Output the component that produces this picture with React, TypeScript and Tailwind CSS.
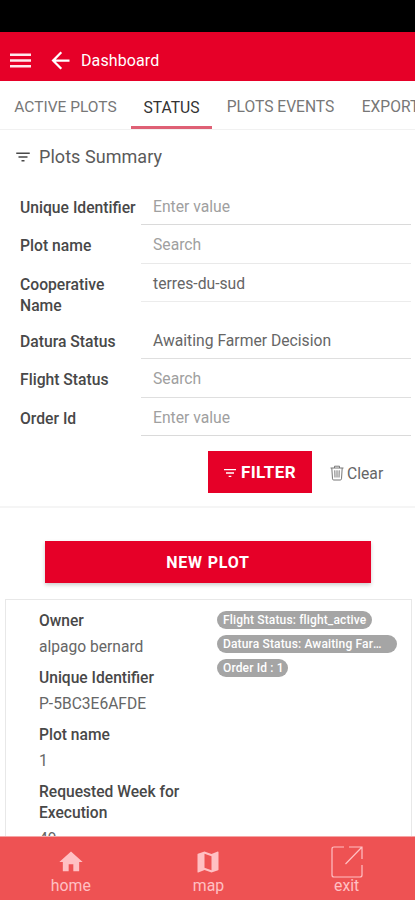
import { MdArrowBack, MdFilterList, MdHome, MdMap } from 'react-icons/md'

const tabs = [
  { label: 'ACTIVE PLOTS', className: 'w-[131px] text-[15.5px]' },
  { label: 'STATUS', className: 'w-[81px] text-[15.7px]', active: true },
  { label: 'PLOTS EVENTS', className: 'w-[137px] text-[15.6px]' },
  { label: 'EXPORTS', className: 'w-[92px] text-[15.6px]' },
]

const filters = [
  { label: 'Unique Identifier', placeholder: 'Enter value', line: 'border-[#dadada]' },
  { label: 'Plot name', placeholder: 'Search', line: 'border-[#e9e9e9]' },
  { label: 'Cooperative Name', value: 'terres-du-sud', line: 'border-[#ececec]' },
  { label: 'Datura Status', value: 'Awaiting Farmer Decision', line: 'border-[#dfdfdf]' },
  { label: 'Flight Status', placeholder: 'Search', line: 'border-[#dfdfdf]' },
  { label: 'Order Id', placeholder: 'Enter value', line: 'border-[#dadada]' },
]

const details = [
  { label: 'Owner', value: 'alpago bernard' },
  { label: 'Unique Identifier', value: 'P-5BC3E6AFDE' },
  { label: 'Plot name', value: '1' },
  { label: 'Requested Week for Execution', value: '49' },
]

const badges = [
  { text: 'Flight Status: flight_active', className: 'w-[155px] pr-1' },
  { text: 'Datura Status: Awaiting Farmer Decision', className: 'w-[180px] pr-3' },
  { text: 'Order Id : 1', className: 'w-[71px] pr-1' },
]

function MenuIcon() {
  return (
    <svg viewBox="0 0 21 15" className="h-[15px] w-[21px]" fill="#ffe9ec">
      <path d="M0 .5h21v2.6H0zM0 6.2h21v2.6H0zM0 11.9h21v2.6H0z" />
    </svg>
  )
}

function TrashIcon() {
  return (
    <svg viewBox="0 0 14 16" className="h-4 w-3.5" fill="none" stroke="#777" strokeWidth="1">
      <path d="M.5 3h13M4.5 3V1.2h5V3M1.8 3l.7 10.8q.1 1.2 1.2 1.2h6.6q1.1 0 1.2-1.2L12.2 3M4.8 5.3l.2 7.2M7 5.3v7.2M9.2 5.3l-.2 7.2" />
    </svg>
  )
}

function ExitIcon() {
  return (
    <svg viewBox="0 0 32 32" className="h-8 w-8" fill="none" stroke="currentColor" strokeWidth="1.2">
      <path d="M13 1H3Q1 1 1 3v26q0 2 2 2h26q2 0 2-2V19M18 1h13v12M31 1 14.5 18" />
    </svg>
  )
}

export default function App() {
  return (
    <div className="flex h-[900px] w-[415px] flex-col overflow-hidden bg-white font-[Roboto,sans-serif] text-[#484848]">
      <div className="h-8 shrink-0 bg-black" />
      <header className="flex h-[49px] shrink-0 items-center bg-[#e60028] pt-2 pl-[10px] text-white">
        <MenuIcon />
        <MdArrowBack className="ml-[16px] h-[27px] w-[27px]" />
        <h1 className="ml-[7px] text-base tracking-[0.1px]">Dashboard</h1>
      </header>

      <nav className="flex h-[49px] shrink-0 overflow-hidden border-b border-[#f1f1f1]">
        {tabs.map((tab) => (
          <div
            key={tab.label}
            className={`flex shrink-0 items-center justify-center border-b-[3px] pt-[9px] ${tab.className} ${
              tab.active ? 'border-[#df6075] text-[#333]' : 'border-transparent text-[#777]'
            }`}
          >
            {tab.label}
          </div>
        ))}
      </nav>

      <main className="min-h-0 flex-1 overflow-hidden">
        <div className="flex h-[57px] items-start pt-[15px] pl-[14px]">
          <MdFilterList className="mt-[3px] h-[18px] w-[18px]" />
          <h2 className="ml-[7px] text-lg leading-6 tracking-[0.05px] text-[#5a5a5a]">Plots Summary</h2>
        </div>

        <section>
          {filters.map((filter) => (
            <div key={filter.label} className="flex min-h-[38.4px] items-start pr-1 pl-5">
              <div className="w-[121px] shrink-0 pt-[10px] pb-[5px] text-[15.7px] leading-[21px] font-medium">
                {filter.label}
              </div>
              <div
                className={`h-[38.4px] flex-1 border-b pt-[9px] pl-3 text-[15.7px] leading-[21px] ${filter.line} ${
                  filter.value ? 'text-[#666]' : 'text-[#a0a0a0]'
                }`}
              >
                {filter.value ?? filter.placeholder}
              </div>
            </div>
          ))}
        </section>

        <div className="flex h-[72px] items-start border-b-2 border-[#f5f5f5] pt-[15px] pl-[208px]">
          <button className="flex h-[42px] w-[104px] items-center gap-[3px] bg-[#e60028] pt-0.5 pl-[14px] text-[17px] font-bold tracking-[0.4px] text-white">
            <MdFilterList className="h-4 w-4" />
            FILTER
          </button>
          <button className="ml-[18px] flex h-[45px] items-center gap-[3px] text-[15.7px] text-[#666]">
            <TrashIcon />
            Clear
          </button>
        </div>

        <button className="mt-[33px] ml-[45px] flex h-[42px] w-[326px] items-center justify-center bg-[#e60028] pt-0.5 text-base font-bold tracking-[0.8px] text-white shadow-[0_2px_4px_rgba(0,0,0,0.2)]">
          NEW PLOT
        </button>

        <article className="mt-4 mr-[3px] ml-[5px] flex h-[300px] border border-[#e8e8e8]">
          <dl className="w-[211px] pt-[11px] pl-[33px] text-[15.6px] leading-[21px]">
            {details.map((detail) => (
              <div key={detail.label} className="mb-[10px]">
                <dt className="w-[150px] font-medium">{detail.label}</dt>
                <dd className="mt-[5px] text-[#666]">{detail.value}</dd>
              </div>
            ))}
          </dl>
          <div className="flex flex-col gap-[6px] pt-[11px]">
            {badges.map((badge) => (
              <span
                key={badge.text}
                className={`block h-[18px] truncate rounded-full bg-[#a5a5a5] pl-1.5 text-xs leading-[18px] font-medium tracking-[0.15px] text-white ${badge.className}`}
              >
                {badge.text}
              </span>
            ))}
          </div>
        </article>
      </main>

      <footer className="grid h-[64px] shrink-0 grid-cols-3 border-t border-[#f5a5a5] bg-[#ee5253] pl-0.5 text-[15.8px] leading-5 text-[#ffc0c3]">
        <div className="flex flex-col items-center pt-[11px]">
          <MdHome className="h-7 w-7" />
          <span>home</span>
        </div>
        <div className="flex flex-col items-center pt-[11px]">
          <MdMap className="h-7 w-7" />
          <span>map</span>
        </div>
        <div className="flex flex-col items-center pt-[9px] pl-px">
          <ExitIcon />
          <span className="-mt-0.5">exit</span>
        </div>
      </footer>
    </div>
  )
}
